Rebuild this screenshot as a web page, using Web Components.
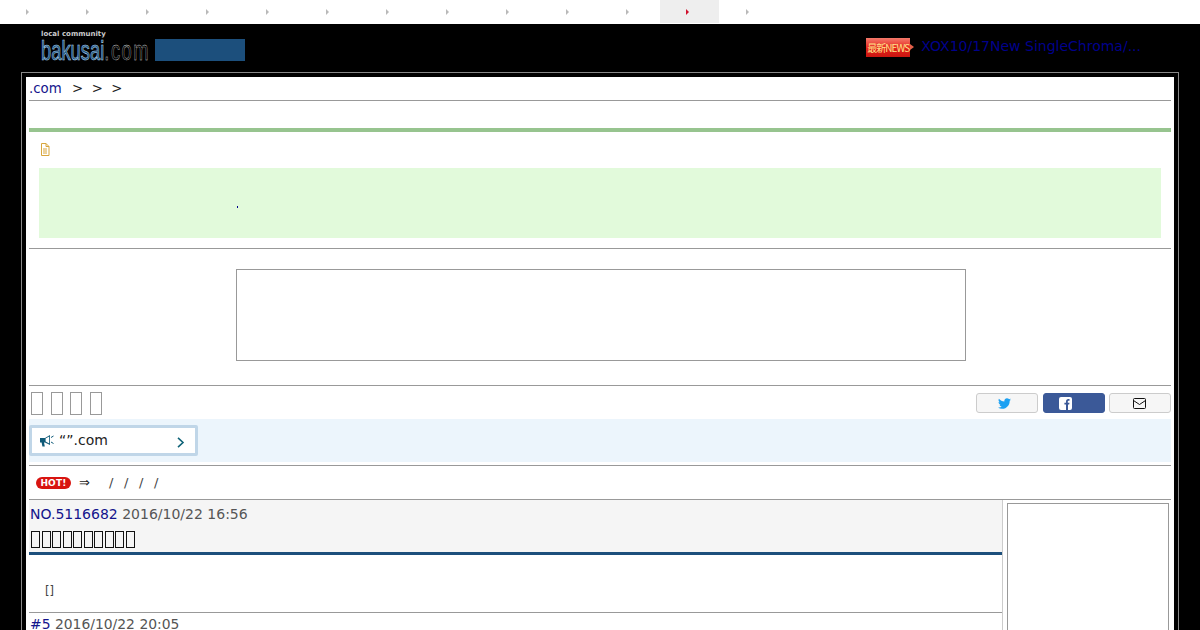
<!DOCTYPE html>
<html>
<head>
<meta charset="utf-8">
<style>
html, body { margin: 0; height: 630px; overflow: hidden; background: #000; }
body { font-family: "DejaVu Sans", sans-serif; font-size: 14px; }
</style>
</head>
<body>
<bk-nav></bk-nav>
<bk-header></bk-header>
<bk-main>
  <bk-crumb></bk-crumb>
  <bk-notice></bk-notice>
  <bk-ad></bk-ad>
  <bk-sharebar></bk-sharebar>
  <bk-band></bk-band>
  <bk-hot></bk-hot>
  <bk-thread></bk-thread>
</bk-main>
<script>
function define(name, html) {
  customElements.define(name, class extends HTMLElement {
    constructor() {
      super();
      this.attachShadow({ mode: "open" }).innerHTML = html;
    }
  });
}

const tofu = (n, cls) => Array(n).fill(`<i class="${cls}"></i>`).join("");

// top menu, 13 tabs of 60px, labels are missing in the shot, only the arrows stay
const tabs = Array.from({ length: 13 }, (_, i) => `
  <div class="tab ${i == 11 ? "on" : ""}"><svg width="3" height="6" viewBox="0 0 3 6"><path d="M0 0l3 3-3 3z"/></svg></div>`).join("");

define("bk-nav", `
<style>
:host { display: flex; height: 23px; background: #fff; padding-bottom: 1px; }
.tab { width: 60px; box-sizing: border-box; padding-left: 26px; display: flex; align-items: center; }
.tab svg { fill: #b9b9b9; }
.on { background: #eee; width: 59px; margin-right: 1px; }
.on svg { fill: #d0102c; }
</style>
${tabs}`);

define("bk-header", `
<style>
:host { display: flex; height: 48px; background: #000; align-items: flex-start; box-sizing: border-box; padding-left: 41px; }
.logo { width: 114px; padding-top: 5px; color: #fff; }
.small { font: bold 7px/10px "DejaVu Sans", sans-serif; color: #ccc; height: 10px; white-space: nowrap; }
.name { font: 27px/24px "Liberation Sans", sans-serif; white-space: nowrap; transform: scaleX(.68); transform-origin: left; width: 160px; }
.name b { font-weight: 400; color: #1c4f7c; -webkit-text-stroke: .6px #b4d8f0; }
.name span { color: #000; -webkit-text-stroke: .4px #ddd; letter-spacing: 2.2px; }
.blue { width: 90px; height: 22px; margin-top: 15px; background: #1c4f7c; }
.news { margin-left: auto; margin-top: 14px; margin-right: 59px; display: flex; align-items: center; height: 19px; }
.label { position: relative; width: 44px; height: 19px; margin-right: 11px; background: linear-gradient(#f47a6a, #e4201a 55%, #c81610); color: #ffe28a; font: 10px/19px "Noto Sans CJK JP", sans-serif; white-space: nowrap; text-align: center; letter-spacing: -1px; }
.label::after { content: ""; position: absolute; left: 44px; top: 6px; border: 3.5px solid transparent; border-left: 4px solid #e4604a; }
a { color: #00008b; font-size: 14px; line-height: 17px; margin-top: -2px; text-decoration: none; white-space: nowrap; }
</style>
<div class="logo">
  <div class="small">local community</div>
  <div class="name"><b>bakusai</b><span>.com</span></div>
</div>
<div class="blue"></div>
<div class="news"><div class="label">最新NEWS</div><a>XOX10/17New SingleChroma/...</a></div>`);

define("bk-main", `
<style>
:host { display: block; margin: 0 21px; border: 1px solid #888; border-bottom: 0; background: #000; padding: 4px 4px 0; height: 558px; box-sizing: border-box; }
.inner { background: #fff; height: 100%; padding: 0 3px; box-sizing: border-box; overflow: hidden; }
</style>
<div class="inner"><slot></slot></div>`);

define("bk-crumb", `
<style>
:host { display: block; height: 23px; border-bottom: 1px solid #999; font-size: 13.3px; line-height: 23px; color: #222; }
div { white-space: pre; }
a { color: #14148c; margin-right: 2px; }
</style>
<div><a>.com</a>  &gt;  &gt;  &gt;</div>`);

define("bk-notice", `
<style>
:host { display: block; margin-top: 27px; border-top: 4px solid #97c48f; border-bottom: 1px solid #999; height: 116px; }
svg { display: block; margin: 11px 0 0 11px; }
.box { height: 70px; margin: 12px 10px 0; background: #e2fadb; display: flex; align-items: flex-end; }
.dot { width: 1px; height: 2px; background: #00008b; margin: 0 0 30px 198px; }
</style>
<svg width="10" height="13" viewBox="0 0 10 13" fill="none" stroke="#d8a63c" stroke-width="1">
  <path d="M1.5.5h4.5l3 3v9h-7.5zM6 .5v3h3M3 6h4M3 8h4M3 10h4"/>
</svg>
<div class="box"><div class="dot"></div></div>`);

define("bk-ad", `
<style>
:host { display: block; height: 137px; border-bottom: 1px solid #999; padding-top: 20px; box-sizing: border-box; }
div { width: 728px; height: 90px; margin-left: 207px; border: 1px solid #999; }
</style>
<div></div>`);

define("bk-sharebar", `
<style>
:host { display: flex; height: 33px; align-items: flex-start; }
i { display: block; width: 10px; height: 21px; border: 1px solid #999; margin: 6px 5.5px 0 2px; }
.tofus { display: flex; }
.btns { margin-left: auto; margin-top: 7px; display: flex; gap: 5px; }
.btn { width: 60px; height: 18px; border: 1px solid #ccc; border-radius: 3px; background: #f6f6f6; display: flex; align-items: center; justify-content: center; }
.btn.tw { padding-right: 5px; box-sizing: content-box; width: 55px; }
.btn.fb { background: #3b5998; border-color: #3b5998; padding-right: 18px; box-sizing: content-box; width: 42px; }
.btn.mail { margin-left: -1px; padding-right: 2px; width: 58px; }
</style>
<div class="tofus">${tofu(4, "t")}</div>
<div class="btns">
  <div class="btn tw"><svg width="13" height="13" viewBox="0 0 512 512" fill="#1da1f2"><path d="M459.37 151.716c.325 4.548.325 9.097.325 13.645 0 138.72-105.583 298.558-298.558 298.558-59.452 0-114.68-17.219-161.137-47.106 8.447.974 16.568 1.299 25.34 1.299 49.055 0 94.213-16.568 130.274-44.832-46.132-.975-84.792-31.188-98.112-72.772 6.498.974 12.995 1.624 19.818 1.624 9.421 0 18.843-1.3 27.614-3.573-48.081-9.747-84.143-51.98-84.143-102.985v-1.299c13.969 7.797 30.214 12.67 47.431 13.319-28.264-18.843-46.781-51.005-46.781-87.391 0-19.492 5.197-37.36 14.294-52.954 51.655 63.675 129.3 105.258 216.365 109.807-1.624-7.797-2.599-15.918-2.599-24.04 0-57.828 46.782-104.934 104.934-104.934 30.213 0 57.502 12.67 76.67 33.137 23.715-4.548 46.456-13.32 66.599-25.34-7.798 24.366-24.366 44.833-46.132 57.827 21.117-2.273 41.584-8.122 60.426-16.243-14.292 20.791-32.161 39.308-52.628 54.253z"/></svg></div>
  <div class="btn fb"><svg width="13" height="13" viewBox="0 0 13 13"><rect width="13" height="13" rx="2" fill="#fff"/><path d="M7 13V7.6H5.4V5.7H7V4.4C7 2.9 7.9 2 9.3 2h1.2v1.8h-.8c-.7 0-.9.3-.9.9v1h1.7l-.3 1.9H9V13z" fill="#3b5998"/></svg></div>
  <div class="btn mail"><svg width="13" height="11" viewBox="0 0 13 11" fill="none" stroke="#111"><rect x=".5" y=".5" width="12" height="10" rx="1"/><path d="M.5 2.5l6 4 6-4"/></svg></div>
</div>`);

define("bk-band", `
<style>
:host { display: block; height: 43px; background: #ecf5fc; padding-top: 6px; box-sizing: border-box; }
.box { width: 163px; height: 25px; border: 3px solid #c0d6e8; border-radius: 2px; background: #fff; display: flex; align-items: center; font-size: 14px; color: #222; box-sizing: content-box; }
.mega { margin: 0 5px 0 8px; }
span { margin-top: -2px; }
.arrow { margin-left: auto; margin-right: 10px; margin-top: 4px; }
</style>
<div class="box">
  <svg class="mega" width="14" height="12" viewBox="0 0 14 12"><path d="M0 3h5l5-3v10L5 7.5H4l.8 4H2.4l-.8-4H0z" fill="#0f5a78"/><path d="M5.6 3.6L9.2 1.4v7L5.6 6.6z" fill="#fff"/><path d="M11 2.5L13.5 1M11 7l2.5 1.5" stroke="#0f5a78" fill="none"/></svg>
  <span>“”.com</span>
  <svg class="arrow" width="8" height="11" viewBox="0 0 8 11" fill="none" stroke="#0f6378" stroke-width="1.6"><path d="M1 .8l5 4.7-5 4.7"/></svg>
</div>`);

define("bk-hot", `
<style>
:host { display: flex; align-items: center; height: 33px; margin-top: 3px; border-top: 1px solid #999; border-bottom: 1px solid #999; font-size: 13px; color: #444; white-space: pre; }
.hot { width: 35px; height: 12px; margin: 0 8px 0 7px; border-radius: 6px; background: #d81410; color: #fff; font: bold 9px/12px "DejaVu Sans", sans-serif; text-align: center; letter-spacing: .2px; }
.to { color: #222; margin-right: 19px; }
.sl { word-spacing: 6.5px; }
</style>
<span class="hot">HOT!</span><span class="to">⇒</span><span class="sl">/ / / /</span>`);

define("bk-thread", `
<style>
:host { display: flex; gap: 4px; }
.left { width: 973px; border-right: 1px solid #ccc; }
.head { background: #f5f5f5; height: 52px; padding-left: 1px; border-bottom: 3px solid #1c4f7c; color: #555; line-height: 28px; white-space: nowrap; }
a { color: #14148c; }
.title { display: flex; height: 21px; align-items: flex-start; padding-top: 3px; padding-left: 1px; }
.title i { display: block; width: 7px; height: 15px; border: 1px solid #111; margin-right: 1.5px; }
.body { height: 58px; border-bottom: 1px solid #999; font-size: 11.5px; color: #444; padding: 29px 0 0 16px; box-sizing: border-box; }
.meta { padding-left: 1px; line-height: 22px; color: #555; font-size: 13.9px; }
.side { width: 160px; height: 200px; margin-top: 3px; border: 1px solid #999; }
</style>
<div class="left">
  <div class="head">
    <a>NO.5116682</a> 2016/10/22 16:56
    <div class="title">${tofu(10, "t")}</div>
  </div>
  <div class="body">[]</div>
  <div class="meta"><a>#5</a> 2016/10/22 20:05</div>
</div>
<div class="side"></div>`);
</script>
</body>
</html>
